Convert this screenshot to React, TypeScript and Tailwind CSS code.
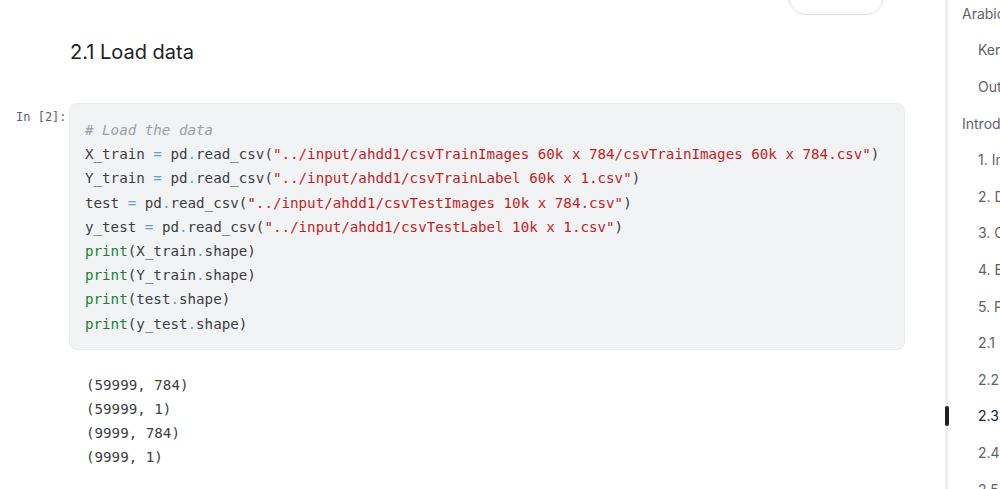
import React from "react";

const mono = { fontFamily: '"DejaVu Sans Mono", "Liberation Mono", monospace' };

function Str({ children }: { children: React.ReactNode }) {
  return <span className="text-[#c5221f]">{children}</span>;
}
function Op({ children }: { children: React.ReactNode }) {
  return <span className="text-[#5f9fd6]">{children}</span>;
}
function Kw({ children }: { children: React.ReactNode }) {
  return <span className="text-[#188038]">{children}</span>;
}

const tocItems: { label: string; indent: boolean; active?: boolean }[] = [
  { label: "Arabic Handwritten Digits", indent: false },
  { label: "Kernel", indent: true },
  { label: "Outline", indent: true },
  { label: "Introduction", indent: false },
  { label: "1. Introduction", indent: true },
  { label: "2. Data", indent: true },
  { label: "3. CNN", indent: true },
  { label: "4. Evaluate", indent: true },
  { label: "5. Prediction", indent: true },
  { label: "2.1 Load data", indent: true },
  { label: "2.2 Check", indent: true },
  { label: "2.3 Normalize", indent: true, active: true },
  { label: "2.4 Reshape", indent: true },
  { label: "2.5 Label", indent: true },
];

export default function App() {
  return (
    <div
      className="flex w-[1000px] h-[489px] overflow-hidden bg-white"
      style={{ fontFamily: 'Inter, "Noto Sans", sans-serif' }}
    >
      <main className="w-[945px] shrink-0 flex flex-col">
        <div className="flex justify-end pr-[61px] -mt-[22px]">
          <div className="w-[96px] h-[37px] rounded-full border border-[#dadce0] bg-white" />
        </div>
        <h2 className="ml-[70px] mt-[23px] text-[20px] leading-[28px] text-[#202124] font-normal">
          2.1 Load data
        </h2>
        <div className="flex mt-[37px]">
          <div
            className="w-[69px] shrink-0 pl-[16px] pt-[6px] text-[12px] leading-[16px] text-[#5f6368]"
            style={mono}
          >
            In [2]:
          </div>
          <div
            className="w-[836px] rounded-[8px] bg-[#f1f3f4] border border-[#e8eaed] pt-[14px] pb-[13px] pl-[15px] text-[14.2px] leading-[24.2px] text-[#3c4043] whitespace-pre"
            style={mono}
          >
            <div className="italic text-[#9aa0a6]"># Load the data</div>
            <div>
              X_train <Op>=</Op> pd<Op>.</Op>read_csv(
              <Str>"../input/ahdd1/csvTrainImages 60k x 784/csvTrainImages 60k x 784.csv"</Str>)
            </div>
            <div>
              Y_train <Op>=</Op> pd<Op>.</Op>read_csv(
              <Str>"../input/ahdd1/csvTrainLabel 60k x 1.csv"</Str>)
            </div>
            <div>
              test <Op>=</Op> pd<Op>.</Op>read_csv(
              <Str>"../input/ahdd1/csvTestImages 10k x 784.csv"</Str>)
            </div>
            <div>
              y_test <Op>=</Op> pd<Op>.</Op>read_csv(
              <Str>"../input/ahdd1/csvTestLabel 10k x 1.csv"</Str>)
            </div>
            <div>
              <Kw>print</Kw>(X_train<Op>.</Op>shape)
            </div>
            <div>
              <Kw>print</Kw>(Y_train<Op>.</Op>shape)
            </div>
            <div>
              <Kw>print</Kw>(test<Op>.</Op>shape)
            </div>
            <div>
              <Kw>print</Kw>(y_test<Op>.</Op>shape)
            </div>
          </div>
        </div>
        <div
          className="ml-[86px] mt-[23px] text-[14.2px] leading-[24.2px] text-[#3c4043] whitespace-pre"
          style={mono}
        >
          <div>(59999, 784)</div>
          <div>(59999, 1)</div>
          <div>(9999, 784)</div>
          <div>(9999, 1)</div>
        </div>
      </main>
      <aside className="relative w-[55px] shrink-0 h-full border-l-[3px] border-[#eceded]">
        <div className="flex flex-col -mt-[5px]">
          {tocItems.map((it) => (
            <div
              key={it.label}
              className={`relative h-[36.6px] shrink-0 flex items-center whitespace-nowrap text-[14px] ${
                it.indent ? "pl-[30px]" : "pl-[14px]"
              } ${it.active ? "text-[#202124]" : "text-[#5f6368]"}`}
            >
              {it.active && (
                <span className="absolute -left-[3px] top-[8px] w-[4px] h-[20px] rounded-[2px] bg-[#202124]" />
              )}
              {it.label}
            </div>
          ))}
        </div>
      </aside>
    </div>
  );
}
